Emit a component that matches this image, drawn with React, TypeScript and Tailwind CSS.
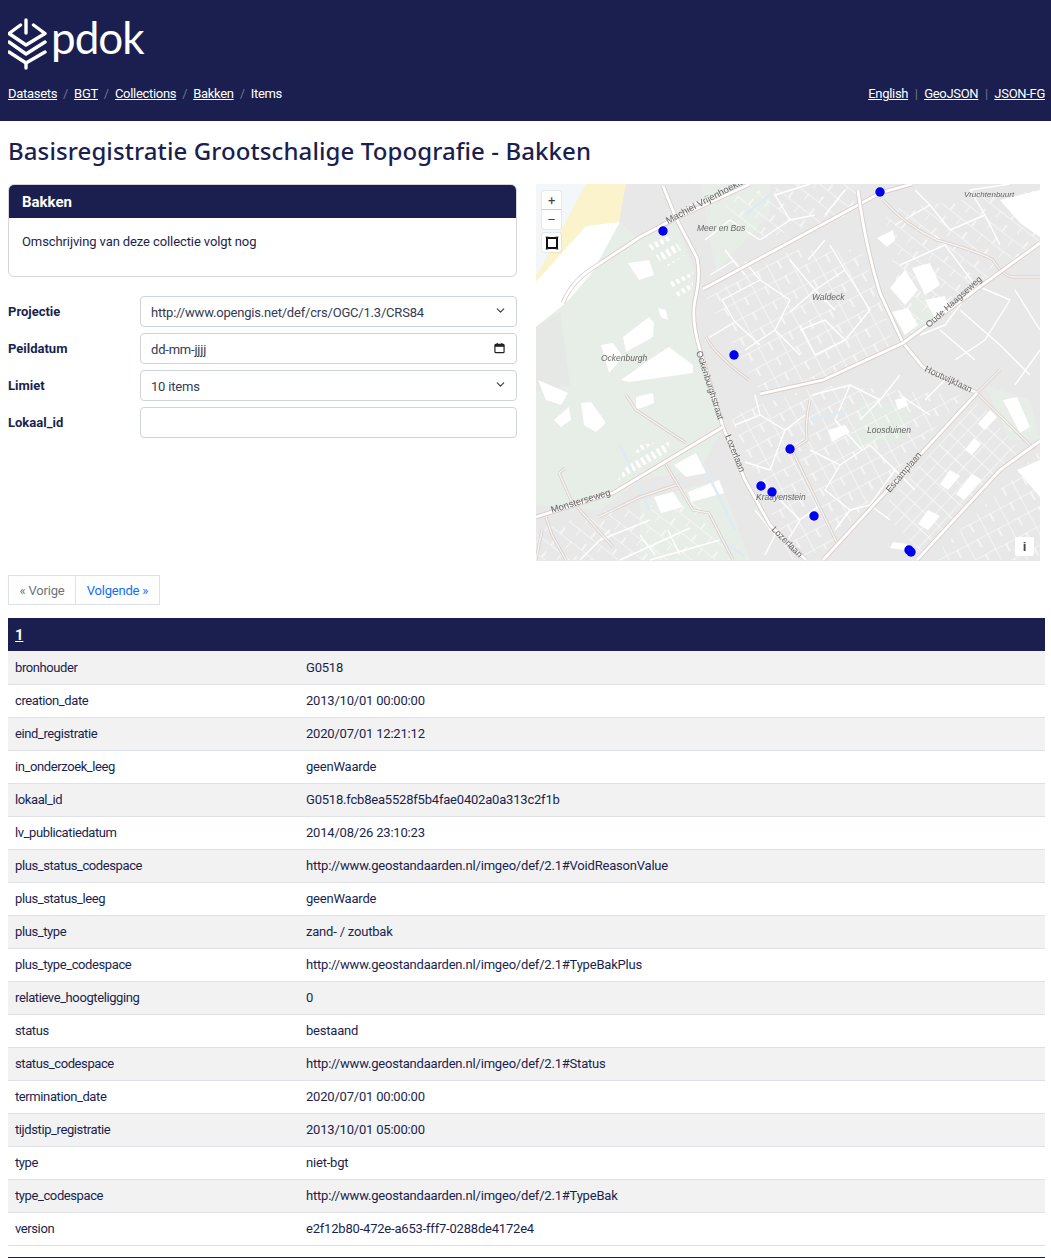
import React from "react";
import { ChevronDown } from "lucide-react";

const NAVY = "bg-[#1a1f50]";

const rows: [string, string][] = [
  ["bronhouder", "G0518"],
  ["creation_date", "2013/10/01 00:00:00"],
  ["eind_registratie", "2020/07/01 12:21:12"],
  ["in_onderzoek_leeg", "geenWaarde"],
  ["lokaal_id", "G0518.fcb8ea5528f5b4fae0402a0a313c2f1b"],
  ["lv_publicatiedatum", "2014/08/26 23:10:23"],
  ["plus_status_codespace", "http://www.geostandaarden.nl/imgeo/def/2.1#VoidReasonValue"],
  ["plus_status_leeg", "geenWaarde"],
  ["plus_type", "zand- / zoutbak"],
  ["plus_type_codespace", "http://www.geostandaarden.nl/imgeo/def/2.1#TypeBakPlus"],
  ["relatieve_hoogteligging", "0"],
  ["status", "bestaand"],
  ["status_codespace", "http://www.geostandaarden.nl/imgeo/def/2.1#Status"],
  ["termination_date", "2020/07/01 00:00:00"],
  ["tijdstip_registratie", "2013/10/01 05:00:00"],
  ["type", "niet-bgt"],
  ["type_codespace", "http://www.geostandaarden.nl/imgeo/def/2.1#TypeBak"],
  ["version", "e2f12b80-472e-a653-fff7-0288de4172e4"],
];

// main roads in page coordinates, the map's viewBox starts at 536,184
const majorRoads = [
  "M563 303 L566 296 Q575 280 590 270 L640 237 L676 218 L750 184",
  "M663 186 L676 218 L697 258 Q701 275 695 300 Q691 320 700 350 L723 427 L745 480 L770 525 L806 560",
  "M703 289 L790 242 L880 193 L912 184",
  "M858 190 L860 205 Q868 255 880 293 L903 343 L923 367 L977 393",
  "M1040 243 L903 343 L823 380 L760 394",
  "M977 393 L823 560",
  "M536 517 L613 493 L663 463 L723 427",
  "M1040 441 L1000 470 L917 560",
];
const minorRoads = [
  "M883 200 Q905 225 937 240 Q980 252 993 260 Q1002 275 1012 277 L1040 277",
  "M977 393 L1033 448 L1040 441",
  "M1000 370 L977 393",
  "M626 395 L636 410 L686 443",
  "M666 465 L693 510 L709 513 L733 560",
  "M599 517 L640 497 L676 485",
  "M559 473 L565 468 M559 473 L571 500 L613 547",
  "M546 517 L552 535 L566 560",
  "M706 337 Q715 355 749 380",
  "M810 400 Q805 420 807 440 L792 450 L837 543",
  "M536 560 L542 530",
];
// side streets, drawn by hand by neighbourhood
const streets = [
  "M705 340 L735 322 L760 345 M735 322 L722 300 L760 280 L790 300 M760 280 L745 262 M790 300 L775 330 L800 355 M775 330 L745 350",
  "M790 260 L815 290 L790 312 M815 290 L845 270 L830 245 M845 270 L870 310 L845 340 L815 355 M815 355 L800 325",
  "M800 330 L825 320 L845 340 M815 290 L835 310 M808 260 L825 240",
  "M895 225 L930 205 L950 230 M930 205 L915 190 M950 230 L985 215 L1000 245 M985 215 L970 190 L1010 184",
  "M900 265 L945 245 L975 285 L1010 300 M945 245 L935 235 M975 285 L945 325 L920 335 M1010 300 L985 340 L955 360",
  "M940 330 L975 360 M960 310 L1000 345 M1015 290 L1040 330 M1000 345 L1030 375 M1040 350 L1015 385",
  "M812 395 L850 385 L880 400 L860 420 M880 400 L900 375 M850 385 L835 420 L862 450",
  "M810 450 L840 465 L825 490 L850 510 L835 530 M840 465 L870 445 L895 470 L870 505 L850 510",
  "M900 395 L930 415 M870 505 L890 520 M925 400 L945 380 M895 470 L915 490",
  "M735 425 L760 415 L785 430 L770 470 L745 462 M760 415 L755 395 M785 430 L805 415",
  "M780 500 L800 520 L785 545 M755 510 L775 535 L765 555 M800 520 L820 505",
  "M580 560 L610 530 M620 560 L690 528 M650 560 L720 540 M600 540 L650 520 M640 535 L655 555 M680 555 L668 530",
  "M690 205 L720 195 M705 240 L730 220 L760 240 M760 240 L790 220 L815 215 M790 220 L775 195 L810 184 M825 215 L845 190",
  "M710 275 L735 260 M725 250 L745 275",
];
const whitePatches = [
  "628,263 649,260 654,275 639,280",
  "658,308 666,310 668,320 661,317",
  "623,337 649,317 654,323 653,337 626,352",
  "601,345 613,343 623,357 609,373",
  "621,380 649,360 669,347 693,365 693,373 629,382",
  "538,380 568,393 561,405 546,400",
  "554,420 569,407 571,420 561,427",
  "581,403 591,402 606,423 596,432 584,425",
  "636,397 653,393 654,403 636,410",
  "674,465 696,453 706,473 686,477",
  "688,492 719,480 724,493 691,502",
  "654,497 673,492 683,507 661,513",
  "877,238 893,230 895,240 887,247",
  "1000,200 1040,190 1040,237 1020,223",
  "1003,400 1017,397 1030,427 1020,433",
  "1017,470 1040,460 1040,497",
  "895,400 905,397 908,405 898,410",
  "828,430 845,425 850,432 832,442",
  // college and office blocks
  "890,288 905,270 918,290 905,305",
  "912,268 930,263 940,285 925,295",
  "892,312 908,308 918,325 905,335",
  "925,300 945,296 950,312 935,318",
  "965,450 974,438 981,444 972,455",
  "990,410 997,417 985,430 978,424",
  "950,470 960,476 948,490 940,484",
  "972,474 982,480 964,500 956,494",
  "928,510 940,516 928,530 918,524",
  "893,542 907,544 905,550 890,548",
];
const dots = [
  [663, 231],
  [880, 192],
  [734, 355],
  [790, 449],
  [761, 486],
  [772, 492],
  [814, 516],
  [909, 550],
  [911, 552],
];
const labels: { t: string; x: number; y: number; r?: number; s?: number; i?: boolean }[] = [
  { t: "Machiel Vrijenhoeklaan", x: 668, y: 224, r: -28, s: 9.5 },
  { t: "Meer en Bos", x: 697, y: 231, s: 8.5, i: true },
  { t: "Vruchtenbuurt", x: 964, y: 197, s: 8, i: true },
  { t: "Waldeck", x: 812, y: 300, s: 8.5, i: true },
  { t: "Oude Haagseweg", x: 929, y: 328, r: -42, s: 9 },
  { t: "Ockenburgh", x: 601, y: 361, s: 8.5, i: true },
  { t: "Ockenburghstraat", x: 696, y: 352, r: 72, s: 9 },
  { t: "Houtwijklaan", x: 924, y: 371, r: 25, s: 9 },
  { t: "Loosduinen", x: 867, y: 433, s: 8.5, i: true },
  { t: "Lozerlaan", x: 725, y: 436, r: 68, s: 9 },
  { t: "Escamplaan", x: 890, y: 493, r: -50, s: 9 },
  { t: "Kraayenstein", x: 756, y: 500, s: 8.5, i: true },
  { t: "Monsterseweg", x: 552, y: 513, r: -17, s: 9.5 },
  { t: "Lozerlaan", x: 771, y: 530, r: 45, s: 9 },
];

function MapDrawing() {
  return (
    <svg viewBox="536 184 504 377" className="block w-full h-full">
      <defs>
        <pattern id="gridA" width="23" height="17" patternUnits="userSpaceOnUse" patternTransform="rotate(-28)">
          <path d="M0 0H23M0 0V17M12 0V9" stroke="#fff" strokeWidth="1.1" fill="none" />
        </pattern>
        <pattern id="gridB" width="27" height="15" patternUnits="userSpaceOnUse" patternTransform="rotate(38)">
          <path d="M0 0H27M0 0V8M14 8V15" stroke="#fff" strokeWidth="1.1" fill="none" />
        </pattern>
        <pattern id="gridC" width="15" height="11" patternUnits="userSpaceOnUse" patternTransform="rotate(-47)">
          <path d="M0 0H15M0 0V11" stroke="#fff" strokeWidth="1.2" fill="none" />
        </pattern>
        <pattern id="gridD" width="6" height="14" patternUnits="userSpaceOnUse" patternTransform="rotate(-30)">
          <rect x="1" y="3" width="3" height="8" fill="#fff" />
        </pattern>
      </defs>
      <g className="blur-[0.4px]">
        <rect x="536" y="184" width="504" height="377" fill="#e8e8e8" />
        {/* coast */}
        <polygon points="536,184 590,184 536,277" fill="#f4f7f9" />
        <polygon points="536,277 586,184 626,184 619,222 592,273 566,303 536,327" fill="#fbf3cc" />
        <polygon points="536,282 586,226 620,222 592,277 566,303 536,327" fill="#fff" />
        {/* green areas */}
        <polygon points="536,327 566,303 592,273 620,222 640,240 676,222 694,270 692,320 723,427 700,470 640,480 600,510 536,505" fill="#e7ede7" />
        <polygon points="536,327 560,312 570,385 536,392" fill="#e6e8e6" />
        <polygon points="700,184 770,184 770,215 736,250 716,270" fill="#e7ede7" />
        <polygon points="860,400 915,405 900,440 850,450" fill="#e5ebe5" />
        <polygon points="985,385 1030,400 1040,440 1010,440" fill="#e7ede7" />
        <polygon points="640,500 720,480 750,560 640,560" fill="#e7ede7" />
        <polygon points="905,300 925,290 935,320 915,335" fill="#e6ece6" />
        {/* neighbourhood street grids */}
        <polygon points="705,295 790,250 862,250 880,300 895,345 823,378 760,392" fill="url(#gridA)" />
        <polygon points="885,210 1040,190 1040,240 905,340" fill="url(#gridB)" />
        <polygon points="730,415 820,385 965,395 825,550 790,560" fill="url(#gridA)" />
        <polygon points="1040,450 1040,560 930,560" fill="url(#gridA)" />
        <polygon points="536,530 610,510 700,500 730,560 536,560" fill="url(#gridB)" />
        <polygon points="720,200 790,184 860,184 850,215 760,240" fill="url(#gridB)" />
        {/* housing rows and the office quarter */}
        <polygon points="1020,450 977,402 880,510 925,555" fill="url(#gridC)" />
        <polygon points="668,283 693,272 693,288 676,298" fill="url(#gridD)" />
        <polygon points="648,245 670,235 685,255 665,268" fill="url(#gridD)" />
        <polygon points="616,483 640,445 670,440 666,455" fill="url(#gridD)" />
        {whitePatches.map((p) => (
          <polygon key={p} points={p} fill="#fff" />
        ))}
        {streets.map((d) => (
          <path key={d} d={d} fill="none" stroke="#fff" strokeWidth="1.4" strokeLinejoin="round" />
        ))}
        {/* water */}
        <path d="M620 445 L650 510 M706 470 L735 530 M770 195 L745 215 M810 420 L850 410 M720 540 L745 556" fill="none" stroke="#dfeaf2" strokeWidth="2.5" />
        {/* roads: pink casing with white fill */}
        {minorRoads.map((d) => (
          <g key={d}>
            <path d={d} fill="none" stroke="#d9cfca" strokeWidth="3" />
            <path d={d} fill="none" stroke="#f5f3f1" strokeWidth="1.4" />
          </g>
        ))}
        {majorRoads.map((d) => (
          <g key={d}>
            <path d={d} fill="none" stroke="#d8cdc8" strokeWidth="4.5" />
            <path d={d} fill="none" stroke="#fff" strokeWidth="2.8" />
          </g>
        ))}
        {labels.map((l) => (
          <text
            key={l.t + l.x}
            x={l.x}
            y={l.y}
            fontSize={l.s}
            fontStyle={l.i ? "italic" : "normal"}
            fill="#666"
            transform={l.r ? `rotate(${l.r} ${l.x} ${l.y})` : undefined}
            className="font-['Liberation_Sans',sans-serif] tracking-normal"
          >
            {l.t}
          </text>
        ))}
      </g>
      {dots.map(([x, y]) => (
        <circle key={`${x}-${y}`} cx={x} cy={y} r="4.7" fill="#0000f0" />
      ))}
    </svg>
  );
}

function Logo() {
  return (
    <div className="flex items-start h-[52px]">
      <svg width="40" height="52" viewBox="8 18 40 52" className="block" fill="none" stroke="#fff" strokeWidth="3.4" strokeLinecap="round" strokeLinejoin="round">
        <path d="M26 20V33" />
        <path d="M20.5 25L9 33.5L26 45L45 33.5L33.5 25" />
        <path d="M9 42L26 54L45 42" />
        <path d="M9 52L26 63L45 52" />
        <path d="M26 63V68" />
      </svg>
      <span className="ml-[3px] text-white text-[44px] leading-[52px] tracking-[-1px] font-['Lato',sans-serif] font-normal -mt-[7px]">
        pdok
      </span>
    </div>
  );
}

function Sep({ c, w }: { c: string; w: string }) {
  return <span className={`${w} text-center text-[#6f7390]`}>{c}</span>;
}

function Select({ value }: { value: string }) {
  return (
    <div className="relative flex-1">
      <select className="w-full h-[31px] appearance-none bg-white border border-[#ced4da] rounded-[4px] pl-[10px] pt-[2px] text-[13px] tracking-[-0.2px] text-[#343a52] outline-none">
        <option>{value}</option>
      </select>
      <ChevronDown className="absolute right-[10px] top-[8px] w-[13px] h-[13px] text-[#343a40] pointer-events-none" strokeWidth={2} />
    </div>
  );
}

function Row({ label, children }: { label: string; children: React.ReactNode }) {
  return (
    <div className="flex items-center">
      <label className="w-[132px] pt-[1px] font-bold text-[13px] tracking-normal text-[#1a1f50]">{label}</label>
      {children}
    </div>
  );
}

export default function App() {
  return (
    <div className="min-h-[1258px] h-[1258px] bg-white font-['Roboto',sans-serif] text-[13px] tracking-[-0.2px] text-[#212529] overflow-hidden">
      {/* Header */}
      <header className={`${NAVY} h-[121px] pl-[8px] pr-[6px] pt-[18px] text-white`}>
        <Logo />
        <nav className="flex justify-between items-center mt-[15px] leading-[18px] tracking-[-0.3px]">
          <div className="flex items-center">
            <a className="underline" href="#">Datasets</a>
            <Sep c="/" w="w-[17px]" />
            <a className="underline" href="#">BGT</a>
            <Sep c="/" w="w-[17px]" />
            <a className="underline" href="#">Collections</a>
            <Sep c="/" w="w-[17px]" />
            <a className="underline" href="#">Bakken</a>
            <Sep c="/" w="w-[17px]" />
            <span>Items</span>
          </div>
          <div className="flex items-center">
            <a className="underline" href="#">English</a>
            <Sep c="|" w="w-[16px]" />
            <a className="underline" href="#">GeoJSON</a>
            <Sep c="|" w="w-[16px]" />
            <a className="underline" href="#">JSON-FG</a>
          </div>
        </nav>
      </header>

      <main className="pl-[8px] pr-[6px]">
        <h1 className="text-[24px] leading-[30px] font-medium tracking-[0.1px] font-['Noto_Sans',sans-serif] text-[#1a1f50] mt-[15px] mb-[18px]">
          Basisregistratie Grootschalige Topografie - Bakken
        </h1>

        <div className="flex gap-[19px]">
          {/* Left column */}
          <div className="w-[509px] shrink-0">
            <div className="border border-[#d5d6da] rounded-[6px] overflow-hidden h-[93px]">
              <div className={`${NAVY} h-[33px] px-[13px] pt-[2px] flex items-center text-white font-bold text-[15px] tracking-normal`}>Bakken</div>
              <p className="px-[13px] pt-[15px] leading-[18px] tracking-[-0.1px] text-[#1a1f50]">Omschrijving van deze collectie volgt nog</p>
            </div>
            <div className="mt-[19px] flex flex-col gap-[6px]">
              <Row label="Projectie">
                <Select value="http://www.opengis.net/def/crs/OGC/1.3/CRS84" />
              </Row>
              <Row label="Peildatum">
                <div className="relative flex-1">
                  <input readOnly value="dd-mm-jjjj" className="w-full h-[31px] bg-white border border-[#ced4da] rounded-[4px] pl-[10px] pt-[2px] text-[13px] text-[#343a52] outline-none" />
                  <svg viewBox="0 0 12 12" className="absolute right-[12px] top-[9px] w-[11px] h-[12px]" fill="none" stroke="#222" strokeWidth="1.3">
                    <rect x="1" y="2" width="10" height="9" rx="1" />
                    <path d="M1 3.5H11" strokeWidth="2.4" />
                    <path d="M3.5 0.5V2M8.5 0.5V2" />
                  </svg>
                </div>
              </Row>
              <Row label="Limiet">
                <Select value="10 items" />
              </Row>
              <Row label="Lokaal_id">
                <input className="flex-1 h-[31px] bg-white border border-[#ced4da] rounded-[4px] outline-none" />
              </Row>
            </div>
          </div>

          {/* Map */}
          <div className="relative w-[504px] h-[377px] shrink-0">
            <MapDrawing />
            <div className="absolute left-[6px] top-[7px] w-[19px] h-[38px] bg-white rounded-[3px] flex flex-col items-center text-[#444] text-[13px] leading-[19px] shadow-[0_0_0_1px_rgba(0,0,0,0.06)]">
              <span className="h-[19px] border-b border-[#ccc] w-full text-center">+</span>
              <span className="h-[19px]">–</span>
            </div>
            <div className="absolute left-[6px] top-[49px] w-[19px] h-[19px] bg-white rounded-[3px] flex items-center justify-center shadow-[0_0_0_1px_rgba(0,0,0,0.06)]">
              <svg viewBox="0 0 14 14" className="w-[14px] h-[14px]" fill="none" stroke="#111" strokeWidth="2">
                <rect x="2" y="2" width="10" height="10" />
                <path d="M0.5 1H3.5M0.5 13H3.5M10.5 1H13.5M10.5 13H13.5" stroke="#444" strokeWidth="1" />
              </svg>
            </div>
            <div className="absolute right-[6px] bottom-[5px] w-[19px] h-[19px] bg-white rounded-[2px] flex items-center justify-center text-[#444] font-bold text-[13px] font-['Liberation_Sans',sans-serif]">
              i
            </div>
          </div>
        </div>

        {/* Pagination */}
        <div className="flex mt-[14px] h-[30px]">
          <span className="w-[68px] pt-[2px] flex items-center justify-center border border-[#dee2e6] text-[#6c757d]">« Vorige</span>
          <a href="#" className="w-[85px] -ml-px pt-[2px] flex items-center justify-center border border-[#dee2e6] text-[#0d6efd]">Volgende »</a>
        </div>

        {/* Attributes table */}
        <table className="w-full mt-[13px] border-collapse table-fixed">
          <colgroup>
            <col className="w-[291px]" />
            <col />
          </colgroup>
          <thead>
            <tr className={`${NAVY} h-[33px] text-white`}>
              <th colSpan={2} className="px-[7px] pt-[2px] text-left font-bold text-[15px]">
                <a href="#" className="underline">1</a>
              </th>
            </tr>
          </thead>
          <tbody>
            {rows.map(([k, v], i) => (
              <tr key={k} className={`h-[33px] border-b border-[#dee2e6] ${i % 2 === 0 ? "bg-[#f2f2f2]" : "bg-white"}`}>
                <td className="px-[7px] tracking-[-0.4px] text-[#1a1f50]">{k}</td>
                <td className="px-[7px] text-[#1a1f50]">{v}</td>
              </tr>
            ))}
          </tbody>
        </table>
        <hr className="mt-[11px] border-t border-[#1a1f50]" />
      </main>
    </div>
  );
}
